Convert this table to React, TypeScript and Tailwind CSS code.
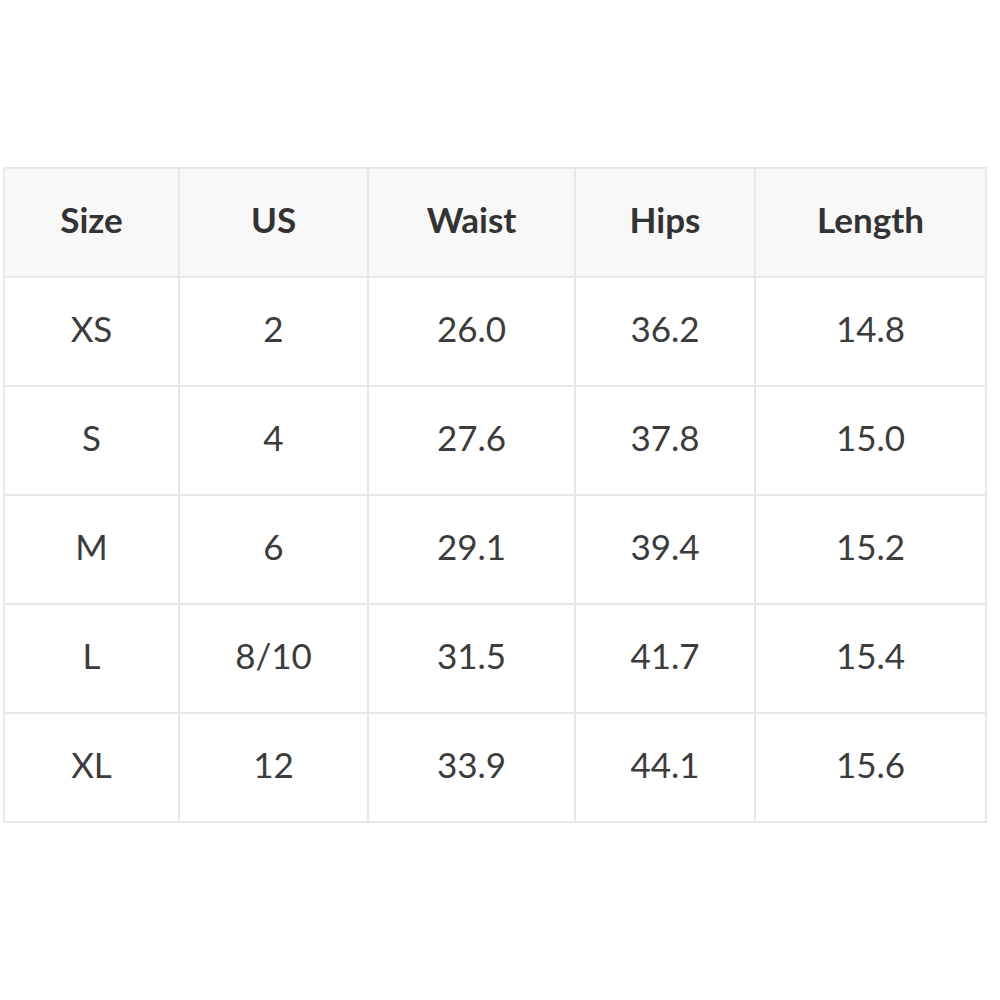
import React from "react";

const columns = [
  { label: "Size", width: "w-[175px]" },
  { label: "US", width: "w-[189px]" },
  { label: "Waist", width: "w-[207px]" },
  { label: "Hips", width: "w-[180px]" },
  { label: "Length", width: "w-[231px]" },
];

const rows = [
  ["XS", "2", "26.0", "36.2", "14.8"],
  ["S", "4", "27.6", "37.8", "15.0"],
  ["M", "6", "29.1", "39.4", "15.2"],
  ["L", "8/10", "31.5", "41.7", "15.4"],
  ["XL", "12", "33.9", "44.1", "15.6"],
];

export default function App() {
  return (
    <div className="w-[1000px] h-[1000px] bg-white pt-[167px] pl-[3px] font-['Lato','Noto_Sans',sans-serif]">
      <table className="border-collapse table-fixed w-[982px] text-[#3c3c3c]">
        <thead>
          <tr className="bg-[#f8f8f8]">
            {columns.map((c) => (
              <th
                key={c.label}
                className={`${c.width} h-[109px] pb-[6px] border-2 border-[#e8e8e8] text-center text-[35px] font-bold text-[#333]`}
              >
                {c.label}
              </th>
            ))}
          </tr>
        </thead>
        <tbody>
          {rows.map((r, i) => (
            <tr key={i}>
              {r.map((v, j) => (
                <td
                  key={j}
                  className="h-[109px] pb-[6px] border-2 border-[#e8e8e8] text-center text-[35px] font-normal"
                >
                  {v}
                </td>
              ))}
            </tr>
          ))}
        </tbody>
      </table>
    </div>
  );
}
